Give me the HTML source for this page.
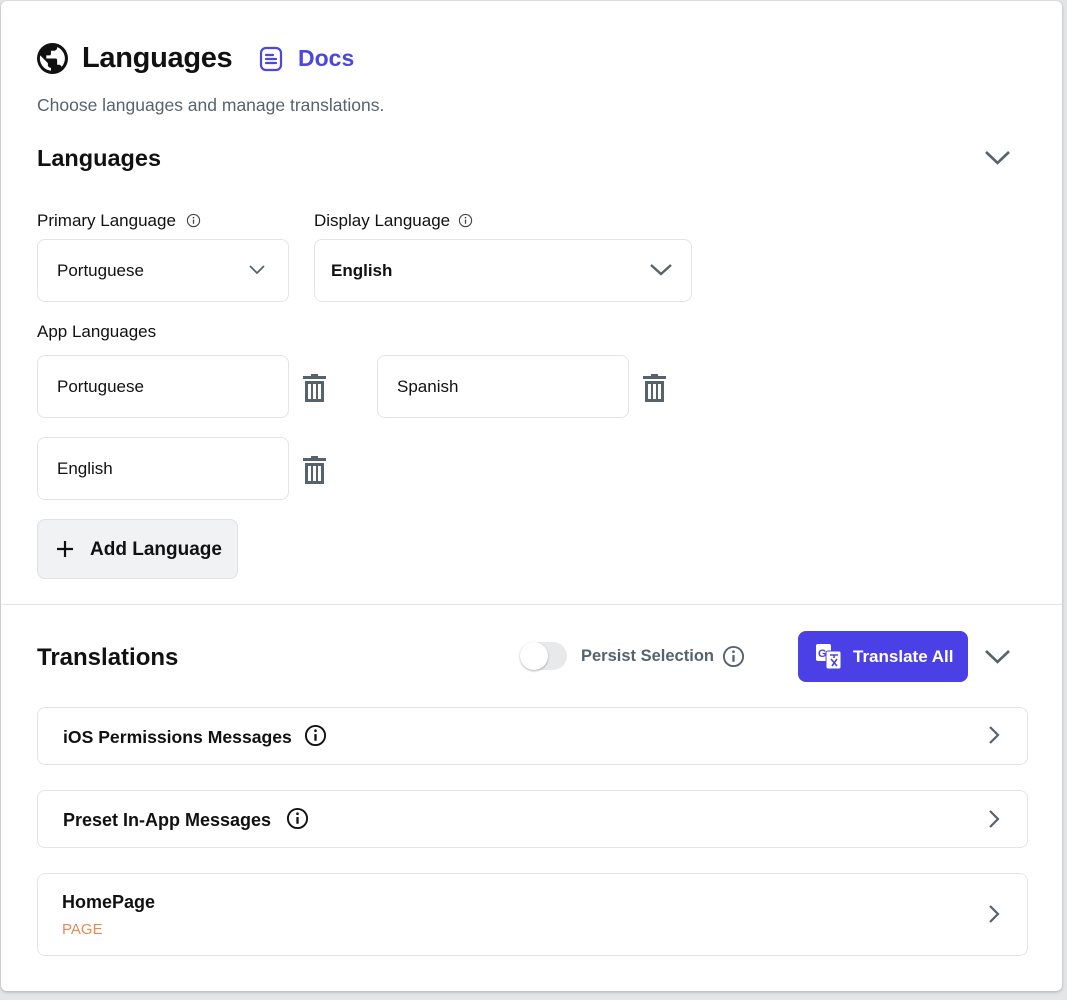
<!DOCTYPE html>
<html><head><meta charset="utf-8"><style>
*{box-sizing:border-box;margin:0;padding:0}
html,body{width:1067px;height:1000px;overflow:hidden}
body{background:#e4e5e7;font-family:"Liberation Sans",sans-serif;color:#111;position:relative}
.card{position:absolute;left:1px;top:1px;width:1061px;height:990px;background:#fff;border-radius:6px;box-shadow:0 1px 3px rgba(0,0,0,.25)}
.a{position:absolute}
.box{position:absolute;border:1px solid #e3e4e6;border-radius:8px;background:#fff}
.t16{font-size:17px}
.gray{color:#57636c}
svg{display:block}
</style></head><body>
<div class="card"></div>

<svg class="a" style="left:37px;top:43px" width="31" height="31" viewBox="2 2 20 20"><path fill="#111" d="M12 2a10 10 0 1 0 0 20 10 10 0 0 0 0-20zm-1 17.9A8 8 0 0 1 4.1 10L9 15v1c0 1.1.9 2 2 2v1.9zm6.9-2.5c-.3-.8-1-1.4-1.9-1.4h-1v-3c0-.6-.4-1-1-1H8v-2h2c.6 0 1-.4 1-1V7h2c1.1 0 2-.9 2-2v-.4a8 8 0 0 1 2.9 12.8z"/></svg>
<div class="a" style="left:82px;top:42px;font-size:29px;font-weight:bold;letter-spacing:-0.3px">Languages</div>
<svg class="a" style="left:258px;top:46px" width="26" height="26" viewBox="0 0 26 26"><rect x="3" y="2" width="20" height="22" rx="5" fill="none" stroke="#4b47e0" stroke-width="2.2"/><path d="M8 9h7M8 13h10M8 17h10" stroke="#4b47e0" stroke-width="2.2" stroke-linecap="round"/></svg>
<div class="a" style="left:298px;top:45px;font-size:23px;font-weight:bold;color:#4b47e0">Docs</div>
<div class="a gray" style="left:37px;top:95px;font-size:17.5px">Choose languages and manage translations.</div>

<div class="a" style="left:37px;top:145px;font-size:23.5px;font-weight:bold">Languages</div>
<svg class="a" style="left:983px;top:147px" width="29" height="20" viewBox="0 0 29 20"><path d="M3 5l11.5 11L26 5" fill="none" stroke="#57636c" stroke-width="2.6"/></svg>

<div class="a t16" style="left:37px;top:211px">Primary Language</div>
<svg class="a" style="left:186px;top:213px" width="15" height="15" viewBox="0 0 16 16"><circle cx="8" cy="8" r="6.5" fill="none" stroke="#444" stroke-width="1.2"/><path d="M8 7v4.5" stroke="#444" stroke-width="1.4"/><circle cx="8" cy="5" r=".9" fill="#444"/></svg>
<div class="a t16" style="left:314px;top:211px">Display Language</div>
<svg class="a" style="left:458px;top:213px" width="15" height="15" viewBox="0 0 16 16"><circle cx="8" cy="8" r="6.5" fill="none" stroke="#444" stroke-width="1.2"/><path d="M8 7v4.5" stroke="#444" stroke-width="1.4"/><circle cx="8" cy="5" r=".9" fill="#444"/></svg>

<div class="box" style="left:37px;top:239px;width:252px;height:63px"></div>
<div class="a t16" style="left:57px;top:261px">Portuguese</div>
<svg class="a" style="left:248px;top:262px" width="18" height="14" viewBox="0 0 18 14"><path d="M2 4l7 7 7-7" fill="none" stroke="#57636c" stroke-width="1.8"/></svg>
<div class="box" style="left:314px;top:239px;width:378px;height:63px"></div>
<div class="a t16" style="left:331px;top:261px;font-weight:bold">English</div>
<svg class="a" style="left:649px;top:260px" width="24" height="18" viewBox="0 0 24 18"><path d="M2 5l10 9 10-9" fill="none" stroke="#57636c" stroke-width="2.4"/></svg>

<div class="a t16" style="left:37px;top:322px">App Languages</div>

<div class="box" style="left:37px;top:355px;width:252px;height:63px"></div>
<div class="a t16" style="left:57px;top:377px">Portuguese</div>
<div class="box" style="left:377px;top:355px;width:252px;height:63px"></div>
<div class="a t16" style="left:397px;top:377px">Spanish</div>
<div class="box" style="left:37px;top:437px;width:252px;height:63px"></div>
<div class="a t16" style="left:57px;top:459px">English</div>

<svg class="a" style="left:302px;top:373px" width="25" height="30" viewBox="0 0 25 30"><path fill="#57636c" d="M9 1h7v2h8v3H1V3h8zM3 8h19v21H3zm3 3v15h3V11zm5 0v15h3V11zm5 0v15h3V11z"/></svg>
<svg class="a" style="left:642px;top:373px" width="25" height="30" viewBox="0 0 25 30"><path fill="#57636c" d="M9 1h7v2h8v3H1V3h8zM3 8h19v21H3zm3 3v15h3V11zm5 0v15h3V11zm5 0v15h3V11z"/></svg>
<svg class="a" style="left:302px;top:455px" width="25" height="30" viewBox="0 0 25 30"><path fill="#57636c" d="M9 1h7v2h8v3H1V3h8zM3 8h19v21H3zm3 3v15h3V11zm5 0v15h3V11zm5 0v15h3V11z"/></svg>

<div class="a" style="left:37px;top:519px;width:201px;height:60px;background:#f1f2f4;border:1px solid #e0e1e3;border-radius:8px"></div>
<svg class="a" style="left:56px;top:540px" width="18" height="18" viewBox="0 0 18 18"><path d="M9 1v16M1 9h16" stroke="#111" stroke-width="2.2"/></svg>
<div class="a" style="left:90px;top:539px;font-size:19px;font-weight:bold">Add Language</div>

<div class="a" style="left:1px;top:604px;width:1061px;height:1px;background:#e3e4e6"></div>

<div class="a" style="left:37px;top:644px;font-size:24px;font-weight:bold">Translations</div>
<div class="a" style="left:520px;top:642px;width:47px;height:28px;border-radius:14px;background:#e8e9eb"></div>
<div class="a" style="left:520px;top:642px;width:28px;height:28px;border-radius:50%;background:#fff;box-shadow:0 1px 2px rgba(0,0,0,.3)"></div>
<div class="a gray" style="left:581px;top:647px;font-size:16.5px;font-weight:bold">Persist Selection</div>
<svg class="a" style="left:722px;top:645px" width="23" height="23" viewBox="0 0 24 24"><circle cx="12" cy="12" r="10" fill="none" stroke="#57636c" stroke-width="2"/><path d="M12 10.5v7" stroke="#57636c" stroke-width="2.4"/><circle cx="12" cy="7" r="1.4" fill="#57636c"/></svg>
<div class="a" style="left:798px;top:631px;width:170px;height:51px;background:#4b40e6;border-radius:8px"></div>
<svg class="a" style="left:815px;top:643px" width="27" height="27" viewBox="0 0 27 27"><rect x="1" y="1" width="15" height="17" rx="2" fill="#fff"/><rect x="11" y="8" width="15" height="18" rx="2" fill="#fff" stroke="#4b40e6" stroke-width="1"/><text x="3" y="14" font-size="11" font-weight="bold" fill="#4b40e6" font-family="Liberation Sans">G</text><path d="M15 12h8M19 12v3M16 16l6 7M22 16l-5 7" stroke="#4b40e6" stroke-width="1.6" fill="none"/></svg>
<div class="a" style="left:853px;top:647px;font-size:17px;font-weight:bold;color:#fff">Translate All</div>
<svg class="a" style="left:983px;top:646px" width="29" height="20" viewBox="0 0 29 20"><path d="M3 5l11.5 11L26 5" fill="none" stroke="#57636c" stroke-width="2.6"/></svg>

<div class="box" style="left:37px;top:707px;width:991px;height:58px"></div>
<div class="a" style="left:63px;top:727px;font-size:17.6px;font-weight:bold">iOS Permissions Messages</div>
<svg class="a" style="left:304px;top:724px" width="23" height="23" viewBox="0 0 24 24"><circle cx="12" cy="12" r="10" fill="none" stroke="#111" stroke-width="2"/><path d="M12 10.5v7" stroke="#111" stroke-width="2.4"/><circle cx="12" cy="7" r="1.4" fill="#111"/></svg>
<svg class="a" style="left:986px;top:724px" width="16" height="22" viewBox="0 0 16 22"><path d="M4 3l8 8-8 8" fill="none" stroke="#57636c" stroke-width="2.2"/></svg>

<div class="box" style="left:37px;top:790px;width:991px;height:58px"></div>
<div class="a" style="left:63px;top:810px;font-size:18px;font-weight:bold">Preset In-App Messages</div>
<svg class="a" style="left:286px;top:807px" width="23" height="23" viewBox="0 0 24 24"><circle cx="12" cy="12" r="10" fill="none" stroke="#111" stroke-width="2"/><path d="M12 10.5v7" stroke="#111" stroke-width="2.4"/><circle cx="12" cy="7" r="1.4" fill="#111"/></svg>
<svg class="a" style="left:986px;top:808px" width="16" height="22" viewBox="0 0 16 22"><path d="M4 3l8 8-8 8" fill="none" stroke="#57636c" stroke-width="2.2"/></svg>

<div class="box" style="left:37px;top:873px;width:991px;height:83px"></div>
<div class="a" style="left:62px;top:892px;font-size:18px;font-weight:bold">HomePage</div>
<div class="a" style="left:62px;top:921px;font-size:15px;color:#e08b5a">PAGE</div>
<svg class="a" style="left:986px;top:903px" width="16" height="22" viewBox="0 0 16 22"><path d="M4 3l8 8-8 8" fill="none" stroke="#57636c" stroke-width="2.2"/></svg>
</body></html>
